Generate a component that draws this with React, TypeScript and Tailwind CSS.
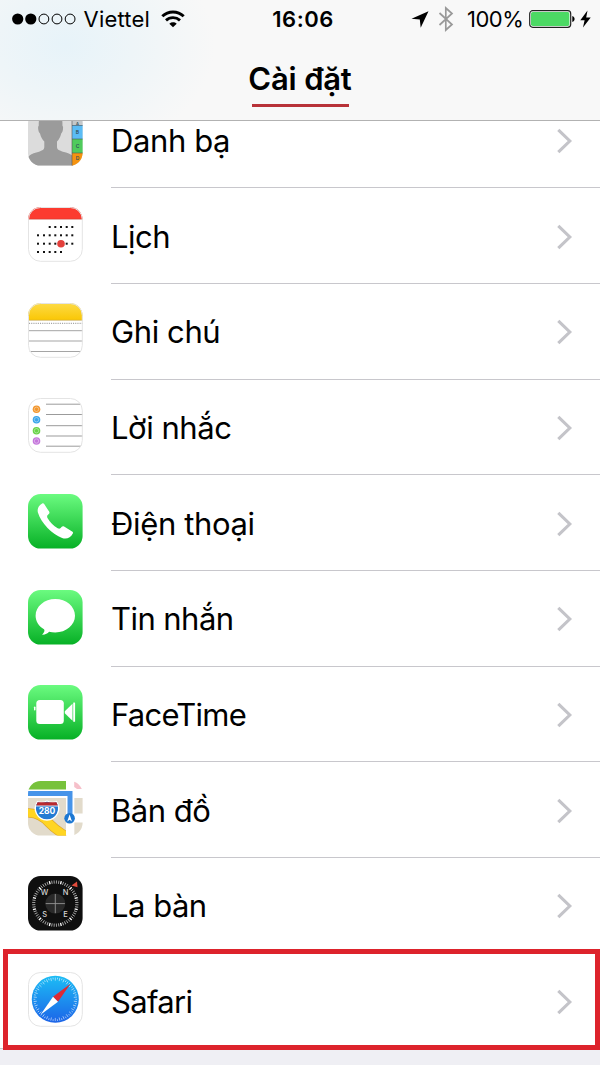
import type { ReactNode } from "react";

function AppIcon({ id, children, border }: { id: string; children: ReactNode; border?: boolean }) {
  return (
    <svg viewBox="0 0 55 55" className="mt-[18.600px] ml-7 h-[55px] w-[55px] shrink-0">
      <defs>
        <clipPath id={`clip-${id}`}>
          <rect width="54.6" height="54.6" rx="12.5" />
        </clipPath>
        <linearGradient id={`green-${id}`} x1="0" y1="0" x2="0" y2="1">
          <stop offset="0" stopColor="#6bfb80" />
          <stop offset="1" stopColor="#06b025" />
        </linearGradient>
      </defs>
      <g clipPath={`url(#clip-${id})`}>{children}</g>
      {border && <rect x="0.5" y="0.5" width="53.8" height="53.8" rx="12" fill="none" stroke="#e4e4e4" />}
    </svg>
  );
}

function Contacts() {
  return (
    <AppIcon id="contacts">
      <rect width="55" height="55" fill="#dcdcdc" />
      <path
        d="M22.500 2C13 2 10.300 6 10.800 14.500c-1.300 1-.7 6.500 1.200 8 .8 3.500 2.300 6 4.300 8V36c0 3-2.700 4-8 5.400C4.500 42.500 2 43.500 0 46v9h45V45c-2-1.500-4-2.500-7-3.500-6-1.600-9-2.500-9-5.500v-5.500c2-2 3.400-4.500 4.200-8 1.900-1.500 2.500-7 1.200-8C34.900 6 32 2 22.500 2Z"
        fill="#9b9b9b"
      />
      <rect x="44" width="11" height="14" fill="#c4c8ca" />
      <rect x="44" y="14" width="11" height="14" fill="#5bbcf5" />
      <rect x="44" y="28" width="11" height="14" fill="#4fcb5c" />
      <rect x="44" y="42" width="11" height="13" fill="#f5930f" />
      <path d="M44 14.500h11M44 28h11M44 42h11M44 0v55" stroke="#555" strokeWidth="0.6" />
      <g fill="#33505c" fontSize="5" fontWeight="600" textAnchor="middle">
        <text x="49.500" y="13.700" fontSize="4">A</text>
        <text x="49.500" y="23">B</text>
        <text x="49.500" y="37">C</text>
        <text x="49.500" y="49">D</text>
      </g>
    </AppIcon>
  );
}

const calendarCols = [10, 16, 21.7, 27.3, 33, 38.7, 44.3];
const calendarRows = [
  { y: 20, from: 2, to: 7 },
  { y: 28.3, from: 0, to: 7 },
  { y: 36.7, from: 0, to: 7 },
  { y: 45, from: 0, to: 5 },
];

function Calendar() {
  return (
    <AppIcon id="calendar" border>
      <rect width="55" height="55" fill="#fff" />
      {calendarRows.map((row) =>
        calendarCols
          .slice(row.from, row.to)
          .map((x) => <rect key={`${x}-${row.y}`} x={x - 1} y={row.y - 1} width="2" height="2" fill="#111" />)
      )}
      <circle cx="33" cy="36.700" r="3.800" fill="#e3403b" />
      <rect width="55" height="12" fill="#fc3b30" />
      <path d="M0 12.200h55" stroke="#c9352c" strokeWidth="0.6" />
    </AppIcon>
  );
}

function Notes() {
  return (
    <AppIcon id="notes" border>
      <defs>
        <linearGradient id="notes-top" x1="0" y1="0" x2="0" y2="1">
          <stop offset="0" stopColor="#fddb47" />
          <stop offset="1" stopColor="#fac705" />
        </linearGradient>
      </defs>
      <rect width="55" height="55" fill="#fff" />
      <rect width="55" height="17" fill="url(#notes-top)" />
      <path d="M0 17.300h55" stroke="#c9a94a" strokeWidth="0.7" />
      <path d="M1 20.300h54" stroke="#a5a5a5" strokeWidth="1.3" strokeDasharray="1.1 1.100" />
      <path d="M0 27.700h55M0 38h55M0 48.500h55" stroke="#9b9b9b" strokeWidth="0.9" />
    </AppIcon>
  );
}

const reminders = [
  { y: 11.3, color: "#f2962c" },
  { y: 21.7, color: "#3aa5ea" },
  { y: 32.7, color: "#69d348" },
  { y: 43, color: "#c577dc" },
];

function Reminders() {
  return (
    <AppIcon id="reminders" border>
      <rect width="55" height="55" fill="#fff" />
      <path d="M18 6.200h37M18 16.500h37M18 27.700h37M18 38h37M18 48.200h37" stroke="#909090" strokeWidth="0.9" />
      {reminders.map((r) => (
        <g key={r.color} fill={r.color}>
          <circle cx="8.500" cy={r.y} r="3.800" />
          <circle cx="8.500" cy={r.y} r="2.200" stroke="#fff" strokeWidth="0.6" strokeOpacity="0.65" />
        </g>
      ))}
    </AppIcon>
  );
}

function Phone() {
  return (
    <AppIcon id="phone">
      <rect width="55" height="55" fill="url(#green-phone)" />
      <path
        d="M14.200 9.500c.8-.5 1.500-.2 2 .6l4.900 7.500c.6 1 .4 1.700-.4 2.500-1.500 1.300-2 2.200-1.200 3.800 2.300 4.200 6 7.900 10.200 10.300 1.600.9 2.500.5 3.800-1.100.8-.9 1.600-1.100 2.600-.5l8 4.800c.9.500 1.200 1.200.7 2.100-2.200 4.200-6.100 6-10.700 4.500C24.500 40.800 13 29 9.900 18.600 9 14.800 10.600 11.500 14.200 9.500Z"
        fill="#fff"
      />
    </AppIcon>
  );
}

function Messages() {
  return (
    <AppIcon id="messages">
      <rect width="55" height="55" fill="url(#green-messages)" />
      <path
        d="M27.300 9C16.400 9 7.600 16.500 7.600 25.700c0 5.600 3.300 10.500 8.400 13.500 1 .8.400 3.400-1.900 5.500 3 .2 5.400-1.300 7-3 2 .5 4 .7 6.200.7C38.200 42.400 47 35 47 25.700S38.200 9 27.300 9Z"
        fill="#fff"
      />
    </AppIcon>
  );
}

function FaceTime() {
  return (
    <AppIcon id="facetime">
      <rect width="55" height="55" fill="url(#green-facetime)" />
      <g fill="#fff">
        <rect x="8.300" y="15" width="27.500" height="24" rx="3.500" />
        <path d="M36.800 26.200l7.700-7.500v17l-7.700-7.500Z" />
        <rect x="45.200" y="17.500" width="1.900" height="19.200" rx="0.500" />
        <rect x="6" y="21.500" width="1.500" height="4" rx="0.700" />
      </g>
    </AppIcon>
  );
}

function Maps() {
  return (
    <AppIcon id="maps">
      <rect width="55" height="55" fill="#fff" />
      <rect width="38" height="8.500" fill="#77c23b" />
      <path d="M46.200 0H55v8h-6l-2.800-2Z" fill="#f6c0ca" />
      <path d="M0 17h38v38H0Z" fill="#e2dbcb" />
      <path d="M46.200 17H55v15.500h-8.800ZM46.200 41.500H55V55h-8.800Z" fill="#e2dbcb" />
      <path d="M0 32c9-.5 15 3.500 21 10 6 6.500 9 8 17 13" stroke="#e0a92b" strokeWidth="9.500" fill="none" />
      <path d="M0 32c9-.5 15 3.500 21 10 6 6.500 9 8 17 13" stroke="#ffd522" strokeWidth="8" fill="none" />
      <path d="M38 17h8.200v38H38Z" fill="#fff" />
      <path d="M48 55l7-6v6Z" fill="#ffd522" />
      <path d="M0 12.500h42V37" stroke="#4794e9" strokeWidth="5" fill="none" />
      <path
        d="M9.500 20.500c3 1.300 6 1 9.500-.5 3.500 1.500 6.500 1.800 9.500.5 3 4.500 3 8 1 12-1.800 3.500-5.800 6.500-10.500 6.500S10.300 36 8.500 32.500c-2-4-2-7.500 1-12Z"
        fill="#237bd3"
        stroke="#fff"
        strokeWidth="1.300"
      />
      <path d="M9.500 21.200h19l1.400 3.500H8.100Z" fill="#b9292e" />
      <path d="M8 25h22" stroke="#fff" strokeWidth="0.8" />
      <text x="19" y="33" fontSize="8.500" fontWeight="700" fill="#fff" textAnchor="middle">
        280
      </text>
      <circle cx="41.600" cy="37.300" r="5.300" fill="#1d78d2" />
      <path d="M41.600 33.600l2.400 6.800-2.400-1.600-2.400 1.600Z" fill="#fff" />
    </AppIcon>
  );
}

const ticks = Array.from({ length: 60 }, (_, i) => i * 6);

function Compass() {
  return (
    <AppIcon id="compass">
      <rect width="55" height="55" fill="#0f0f0f" />
      <circle cx="27.300" cy="27.600" r="10" fill="#292929" />
      {ticks.map((deg) => (
        <path
          key={deg}
          d="M27.300 4.400v3.200"
          transform={`rotate(${deg + 45} 27.300 27.600)`}
          stroke={deg % 30 === 0 ? "#fff" : "#aaa"}
          strokeWidth={deg % 30 === 0 ? 1.3 : 0.9}
        />
      ))}
      <path d="M27.300 18v19.200M17.700 27.600h19.200" stroke="#949494" strokeWidth="0.9" />
      <g fill="#d5d5d5" fontSize="7.500" fontWeight="500" textAnchor="middle">
        <text x="16.500" y="19">W</text>
        <text x="37.500" y="19">N</text>
        <text x="16.800" y="41">S</text>
        <text x="37.500" y="41">E</text>
      </g>
      <path d="M49 5.500l.5 5.700-6-1.800Z" fill="#e34b3b" />
    </AppIcon>
  );
}

function Safari() {
  return (
    <AppIcon id="safari" border>
      <defs>
        <linearGradient id="safari-dial" x1="0" y1="0" x2="0" y2="1">
          <stop offset="0" stopColor="#1cbdf5" />
          <stop offset="1" stopColor="#1c64e8" />
        </linearGradient>
      </defs>
      <rect width="55" height="55" fill="#fff" />
      <circle cx="27.300" cy="27.300" r="23.500" fill="url(#safari-dial)" />
      {ticks.map((deg, i) => (
        <path
          key={deg}
          d={i % 2 ? "M27.300 5.500v1.800" : "M27.300 5.500v3.200"}
          transform={`rotate(${deg} 27.300 27.300)`}
          stroke="#fff"
          strokeOpacity="0.75"
          strokeWidth="0.7"
        />
      ))}
      <path d="M42.500 11.700L30 29.700l-5-4.900Z" fill="#dc2a35" />
      <path d="M12.500 42.700l12.500-17.900 5 4.900Z" fill="#fff" />
    </AppIcon>
  );
}

const rows = [
  { label: "Danh bạ", icon: <Contacts />, tracking: "tracking-[-0.400px]" },
  { label: "Lịch", icon: <Calendar />, tracking: "tracking-[-0.500px]" },
  { label: "Ghi chú", icon: <Notes />, tracking: "tracking-[-0.400px]" },
  { label: "Lời nhắc", icon: <Reminders />, tracking: "tracking-[-0.450px]" },
  { label: "Điện thoại", icon: <Phone />, tracking: "tracking-[-0.350px]" },
  { label: "Tin nhắn", icon: <Messages />, tracking: "tracking-[-0.550px]" },
  { label: "FaceTime", icon: <FaceTime />, tracking: "tracking-[-0.750px]" },
  { label: "Bản đồ", icon: <Maps />, tracking: "tracking-[-0.500px]" },
  { label: "La bàn", icon: <Compass />, tracking: "tracking-[-0.500px]" },
  { label: "Safari", icon: <Safari />, tracking: "tracking-[-0.650px]", highlighted: true },
];

function StatusBar() {
  return (
    <div className="grid h-[38px] grid-cols-[1fr_auto_1fr] items-center text-[22px] leading-[38px]">
      <div className="flex items-center pl-[11.500px]">
        <svg viewBox="0 0 65 12" className="h-3 w-[65px]">
          {[0, 1, 2, 3, 4].map((i) => (
            <circle
              key={i}
              cx={5.7 + i * 13.1}
              cy="6"
              r={i < 2 ? 5.6 : 4.9}
              fill={i < 2 ? "#000" : "none"}
              stroke={i < 2 ? "none" : "#000"}
            />
          ))}
        </svg>
        <span className="ml-[7px] w-[67px] tracking-[0.200px] whitespace-nowrap">Viettel</span>
        <svg viewBox="0 0 24 18" className="ml-[10px] h-[18px] w-6" fill="none" stroke="#000" strokeWidth="2.900">
          <path d="M1.300 6.300C7.300.5 16.700.5 22.700 6.300" />
          <path d="M5 10.400c4-3.700 10-3.700 14 0" />
          <path d="M12 17.300l-3.700-3.600c2.200-1.900 5.200-1.900 7.400 0Z" fill="#000" stroke="none" />
        </svg>
      </div>
      <span className="pl-[6px] font-semibold tracking-[0.500px]">16:06</span>
      <div className="flex items-center justify-end pr-[9px]">
        <svg viewBox="0 0 18 17" className="h-[17px] w-[18px]">
          <path d="M17.500.3L9.700 16.700 8.800 8.600.5 7.800Z" />
        </svg>
        <svg viewBox="0 0 16 26" className="ml-[9px] h-[26px] w-4" fill="none" stroke="#999" strokeWidth="1.700">
          <path d="M1.500 7l12.500 11.500L7.800 24V2L14 7.500 1.500 19" />
        </svg>
        <span className="ml-[13px] w-[57px] tracking-[-0.500px] whitespace-nowrap">100%</span>
        <svg viewBox="0 0 47 18" className="ml-[5px] h-[18px] w-[47px]">
          <rect x="0.700" y="0.700" width="41" height="16.600" rx="3" fill="#fff" stroke="#222" strokeWidth="1.200" />
          <rect x="2" y="2" width="38.400" height="14" rx="1.800" fill="#4cd964" />
          <path d="M43.300 6c3 1 3 5 0 6Z" />
        </svg>
        <svg viewBox="0 0 11 18" className="ml-[4px] h-[18px] w-[11px]">
          <path d="M7.500.5L.3 10.200h4.300L3 17.500l7.700-10H6.200Z" />
        </svg>
      </div>
    </div>
  );
}

export default function App() {
  return (
    <div className="flex h-[1065px] w-[600px] flex-col overflow-hidden bg-[#efeff4] font-['Inter',sans-serif] text-black">
      <header className="h-[121px] shrink-0 border-b border-[#b2b2b2] bg-[#f8f8f8] bg-[radial-gradient(ellipse_150px_110px_at_65px_45px,#e7f3f9_0%,#eef5f8_45%,#f8f8f8_100%)]">
        <StatusBar />
        <div className="flex flex-col items-center">
          <h1 className="mt-[20px] h-[46px] text-[31px] leading-[42px] font-semibold tracking-[-0.200px]">Cài đặt</h1>
          <div className="h-[3px] w-[97px] bg-[#b83238]" />
        </div>
      </header>

      {/* The list is scrolled, so the first row starts behind the header */}
      <main className="min-h-0 flex-1 overflow-hidden">
        <ul className="-mt-[28.300px] border-b border-[#c8c7cc] bg-white">
          {rows.map((row) => (
            <li key={row.label} className="relative flex h-[95.650px] last:h-[95px]">
              {row.icon}
              <div
                className={`ml-7 flex flex-1 items-center justify-between pr-[27px] ${
                  row.highlighted ? "" : "border-b border-[#c8c7cc]"
                }`}
              >
                <span className={`pt-[2px] text-[31px] leading-[40px] whitespace-nowrap ${row.tracking}`}>{row.label}</span>
                <svg viewBox="0 0 16 26" className="mt-[2px] h-[26px] w-4" fill="none" stroke="#c4c4c9" strokeWidth="3.100">
                  <path d="M1.300 1.800L12.800 13 1.300 24.200" />
                </svg>
              </div>
              {row.highlighted && (
                <div className="absolute -top-[4.600px] right-0 left-[3px] h-[101px] border-[5px] border-[#dd232c]" />
              )}
            </li>
          ))}
        </ul>
      </main>
    </div>
  );
}
